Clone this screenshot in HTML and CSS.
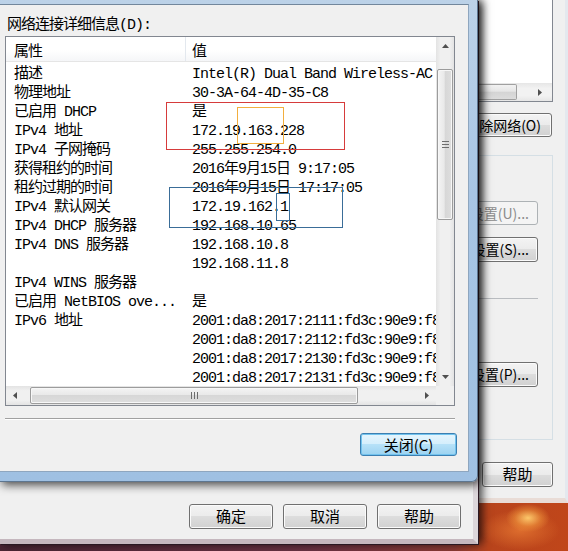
FILE: index.html
```html
<!DOCTYPE html>
<html>
<head>
<meta charset="utf-8">
<title>网络连接详细信息</title>
<link rel="stylesheet" href="styles.css">
</head>
<body>

<!-- window behind, on the right -->
<div class="win back">
    <div class="back_list">
        <div class="small_hscroll">
            <div class="small_thumb"></div>
            <div class="arrow"><svg width="4" height="7"><path d="M0 0L4 3.5L0 7Z" fill="#505050"/></svg></div>
        </div>
    </div>
    <div class="btn btn_right back_del">删除网络(O)</div>
    <div class="group">
        <div class="btn btn_right btn_dis set_u">设置(U)...</div>
        <div class="btn btn_right set_s">设置(S)...</div>
        <div class="group_line"></div>
        <div class="btn btn_right set_p">设置(P)...</div>
    </div>
    <div class="btn back_help">帮助</div>
</div>

<!-- middle window -->
<div class="win mid">
    <div class="btn big">确定</div>
    <div class="btn big">取消</div>
    <div class="btn big">帮助</div>
</div>

<!-- front dialog -->
<div class="win dlg">
    <div class="client">
        <p class="caption">网络连接详细信息(D):</p>

        <div class="listview">
            <div class="lv_rows">
                <div class="lv_head"><span>属性</span><span>值</span></div>
                <div class="lv_row"><span>描述</span><span>Intel(R) Dual Band Wireless-AC 3160</span></div>
                <div class="lv_row"><span>物理地址</span><span>30-3A-64-4D-35-C8</span></div>
                <div class="lv_row"><span>已启用 DHCP</span><span>是</span></div>
                <div class="lv_row"><span>IPv4 地址</span><span>172.19.163.228</span></div>
                <div class="lv_row"><span>IPv4 子网掩码</span><span>255.255.254.0</span></div>
                <div class="lv_row"><span>获得租约的时间</span><span>2016年9月15日 9:17:05</span></div>
                <div class="lv_row"><span>租约过期的时间</span><span>2016年9月15日 17:17:05</span></div>
                <div class="lv_row"><span>IPv4 默认网关</span><span>172.19.162.1</span></div>
                <div class="lv_row"><span>IPv4 DHCP 服务器</span><span>192.168.10.65</span></div>
                <div class="lv_row"><span>IPv4 DNS 服务器</span><span>192.168.10.8</span></div>
                <div class="lv_row"><span></span><span>192.168.11.8</span></div>
                <div class="lv_row"><span>IPv4 WINS 服务器</span><span></span></div>
                <div class="lv_row"><span>已启用 NetBIOS ove...</span><span>是</span></div>
                <div class="lv_row"><span>IPv6 地址</span><span>2001:da8:2017:2111:fd3c:90e9:f8a1:7c2d</span></div>
                <div class="lv_row"><span></span><span>2001:da8:2017:2112:fd3c:90e9:f8a1:7c2d</span></div>
                <div class="lv_row"><span></span><span>2001:da8:2017:2130:fd3c:90e9:f8a1:7c2d</span></div>
                <div class="lv_row"><span></span><span>2001:da8:2017:2131:fd3c:90e9:f8a1:7c2d</span></div>
            </div>

            <div class="vscroll">
                <div class="arrow"><svg width="7" height="4"><path d="M0 4L3.5 0L7 4Z" fill="#505050"/></svg></div>
                <div class="vtrack">
                    <div class="vthumb"><span class="grip_v"></span></div>
                </div>
                <div class="arrow"><svg width="7" height="4"><path d="M0 0L3.5 4L7 0Z" fill="#505050"/></svg></div>
            </div>

            <div class="hscroll">
                <div class="arrow"><svg width="4" height="7"><path d="M4 0L0 3.5L4 7Z" fill="#505050"/></svg></div>
                <div class="htrack">
                    <div class="hthumb"><span class="grip_h"></span></div>
                </div>
                <div class="arrow"><svg width="4" height="7"><path d="M0 0L4 3.5L0 7Z" fill="#505050"/></svg></div>
            </div>
            <div class="corner"></div>
        </div>

        <div class="sep"></div>

        <div class="dlg_buttons">
            <div class="btn btn_default">关闭(C)</div>
        </div>
    </div>
</div>

<!-- hand drawn marks on the screenshot -->
<div class="mark mark_red"></div>
<div class="mark mark_orange"></div>
<div class="mark mark_blue"></div>
<div class="mark mark_blue2"></div>

</body>
</html>
```

FILE: styles.css
```css
body {
    margin: 0;
    width: 568px;
    height: 551px;
    position: relative;
    overflow: hidden;
    font-family: "Liberation Mono", "Noto Sans CJK SC", monospace;
    font-size: 15px;
    color: #000;
    background:
        radial-gradient(ellipse 22px 14px at 528px 518px, rgba(255, 205, 110, 0.95), rgba(240, 150, 60, 0.5) 60%, rgba(240, 150, 60, 0) 100%),
        radial-gradient(ellipse 40px 20px at 520px 530px, rgba(230, 120, 50, 0.8), rgba(200, 80, 30, 0) 100%),
        linear-gradient(90deg, #4a2534 0%, #6b3243 55%, #8c3a34 80%, #b8441c 86%, #c0461a 100%);
}

.win {
    position: absolute;
    box-sizing: border-box;
}

/* ---------- buttons ---------- */
.btn {
    box-sizing: border-box;
    border: 1px solid #707070;
    border-radius: 3px;
    background: linear-gradient(#f3f3f3 0%, #ebebeb 50%, #dddddd 50%, #d1d1d1 100%);
    box-shadow: inset 0 0 0 1px #fbfbfb;
    font-family: "Noto Sans CJK SC", "Open Sans", sans-serif;
    font-size: 14px;
    text-align: center;
    line-height: 22px;
    color: #000;
}
.btn_right {
    text-align: right;
    padding-right: 8px;
}
.btn_dis {
    border-color: #adb2b5;
    background: #f4f4f4;
    box-shadow: none;
    color: #8c8c8c;
}
.btn_default {
    width: 97px;
    height: 23px;
    line-height: 21px;
    margin-left: 360px;
    border-color: #3c7fb1;
    background: linear-gradient(#e6f5fd 0%, #d3eefc 50%, #b6e1f8 50%, #9cd3f1 100%);
    box-shadow: inset 0 0 0 1px #72c3ee;
    font-size: 15px;
}

/* ---------- back window ---------- */
.back {
    left: 400px;
    top: 0;
    width: 168px;
    height: 503px;
    background: #f0f0f0;
    border-right: 3px solid #e4e8ee;
    border-bottom: 5px solid #e9dcd6;
}
.back_list {
    margin-left: 20px;
    width: 133px;
    height: 102px;
    box-sizing: border-box;
    border: 1px solid #828790;
    border-top: none;
    background: #fff;
    display: flex;
    flex-direction: column;
    justify-content: flex-end;
}
.small_hscroll {
    height: 18px;
    display: flex;
    align-items: center;
    background: linear-gradient(#e6e6e6, #f2f2f2 30%, #f2f2f2 70%, #e6e6e6);
}
.small_thumb {
    width: 96px;
    height: 16px;
    box-sizing: border-box;
    border: 1px solid #a0a0a0;
    border-left: none;
    border-radius: 0 2px 2px 0;
    background: linear-gradient(#f2f2f2, #e6e6e6 45%, #d4d4d4 50%, #dcdcdc);
}
.small_hscroll .arrow {
    margin-left: auto;
    width: 24px;
}
.back_del {
    margin: 11px 0 0 10px;
    width: 142px;
    height: 24px;
    padding-right: 10px;
}
.group {
    margin: 18px 0 0 10px;
    width: 143px;
    height: 285px;
    box-sizing: border-box;
    border-top: 1px solid #d5dfe5;
    border-right: 1px solid #d5dfe5;
    border-bottom: 1px solid #d5dfe5;
    padding-right: 14px;
}
.group .btn {
    margin-left: auto;
    width: 110px;
}
.set_u {
    margin-top: 45px;
    height: 24px;
}
.set_s {
    margin-top: 12px;
    height: 25px;
}
.group_line {
    margin: 36px 0 0 auto;
    width: 110px;
    border-top: 1px solid #b9bcc0;
}
.set_p {
    margin-top: 63px;
    height: 25px;
}
.back_help {
    margin: 22px 0 0 82px;
    width: 71px;
    height: 25px;
    font-size: 15px;
}

/* ---------- middle window ---------- */
.mid {
    left: 0;
    top: 0;
    width: 478px;
    height: 544px;
    background: #f0f0f0;
    border-right: 5px solid #dcd6da;
    border-bottom: 5px solid #c5b7be;
    box-shadow: 1px 1px 0 #2a1822, 4px 0 9px rgba(0, 0, 0, 0.75);
    display: flex;
    justify-content: flex-end;
    align-items: flex-end;
    gap: 10px;
    padding: 0 12px 10px 0;
}
.big {
    width: 84px;
    height: 25px;
    font-size: 15px;
}

/* ---------- front dialog ---------- */
.dlg {
    left: 0;
    top: 0;
    width: 478px;
    height: 482px;
    padding: 4px 8px 9px 0;
    background: linear-gradient(#bcd2e8, #a8c5e4 40%, #9fc0e2);
    border-right: 1px solid #5d7690;
    border-bottom: 1px solid #5d7690;
    border-bottom-right-radius: 6px;
    box-shadow: 2px 3px 10px rgba(0, 0, 0, 0.7);
}
.client {
    height: 100%;
    box-sizing: border-box;
    background: #f0f0f0;
    border-top: 1px solid #72879c;
    border-right: 1px solid #8ea6bf;
    border-bottom: 1px solid #8ea6bf;
}
.caption {
    margin: 0;
    padding: 8px 0 0 7px;
    height: 19px;
    line-height: 26px;
    letter-spacing: -1px;
}

.listview {
    margin: 4px 0 0 5px;
    width: 450px;
    height: 370px;
    box-sizing: border-box;
    border: 1px solid #828790;
    background: #fff;
    display: grid;
    grid-template-columns: 430px 18px;
    grid-template-rows: 349px 19px;
}
.lv_rows {
    overflow: hidden;
    letter-spacing: -1px;
    white-space: nowrap;
}
.lv_head {
    display: grid;
    grid-template-columns: 180px 1fr;
    height: 24px;
    line-height: 32px;
    border-bottom: 1px solid #e5e5e5;
    background: linear-gradient(#ffffff 0%, #ffffff 55%, #f5f6f8 100%);
}
.lv_head span:first-child {
    height: 24px;
    padding-left: 8px;
    border-right: 1px solid #e3e8ee;
}
.lv_head span:last-child {
    padding-left: 6px;
}
.lv_row {
    display: grid;
    grid-template-columns: 180px 1fr;
    height: 19px;
    line-height: 25px;
}
.lv_row span:first-child {
    padding-left: 8px;
}
.lv_row span:last-child {
    padding-left: 6px;
}

/* scrollbars */
.arrow {
    display: flex;
    align-items: center;
    justify-content: center;
    flex: none;
}
.vscroll {
    display: flex;
    flex-direction: column;
    background: linear-gradient(90deg, #e3e3e3, #f0f0f0 25%, #f0f0f0 75%, #e3e3e3);
}
.vscroll .arrow {
    height: 18px;
}
.vtrack {
    flex: 1;
}
.vthumb {
    margin: 14px 1px 0;
    height: 151px;
    box-sizing: border-box;
    border: 1px solid #9c9c9c;
    border-radius: 2px;
    background: linear-gradient(90deg, #f4f4f4, #e9e9e9 45%, #d7d7d7 50%, #dedede);
    box-shadow: inset 0 0 0 1px #f7f7f7;
    display: flex;
    align-items: center;
    justify-content: center;
}
.grip_v {
    width: 7px;
    height: 7px;
    background: repeating-linear-gradient(#6d6d6d 0, #6d6d6d 1px, transparent 1px, transparent 3px);
}
.hscroll {
    display: flex;
    align-items: center;
    background: linear-gradient(#e3e3e3, #f0f0f0 25%, #f0f0f0 75%, #e3e3e3);
}
.hscroll .arrow {
    width: 18px;
    height: 19px;
}
.htrack {
    flex: 1;
}
.hthumb {
    margin-left: 6px;
    width: 328px;
    height: 17px;
    box-sizing: border-box;
    border: 1px solid #9c9c9c;
    border-radius: 2px;
    background: linear-gradient(#f4f4f4, #e9e9e9 45%, #d7d7d7 50%, #dedede);
    box-shadow: inset 0 0 0 1px #f7f7f7;
    display: flex;
    align-items: center;
    justify-content: center;
}
.grip_h {
    width: 7px;
    height: 7px;
    background: repeating-linear-gradient(90deg, #6d6d6d 0, #6d6d6d 1px, transparent 1px, transparent 3px);
}
.corner {
    background: #f0f0f0;
}

.sep {
    margin: 12px 0 0 5px;
    width: 450px;
    border-top: 1px solid #a0a0a0;
    border-bottom: 1px solid #ffffff;
}
.dlg_buttons {
    margin-top: 13px;
}

/* ---------- marks ---------- */
.mark {
    position: absolute;
    box-sizing: border-box;
}
.mark_red {
    left: 166px;
    top: 102px;
    width: 179px;
    height: 48px;
    border: 1px solid #d63b3b;
}
.mark_orange {
    left: 237px;
    top: 107px;
    width: 47px;
    height: 37px;
    border: 1px solid #f2ae3e;
}
.mark_blue {
    left: 169px;
    top: 187px;
    width: 174px;
    height: 41px;
    border: 1px solid #3a6d98;
}
.mark_blue2 {
    left: 276px;
    top: 193px;
    width: 14px;
    height: 28px;
    border: 1px solid #3a6d98;
}
```
